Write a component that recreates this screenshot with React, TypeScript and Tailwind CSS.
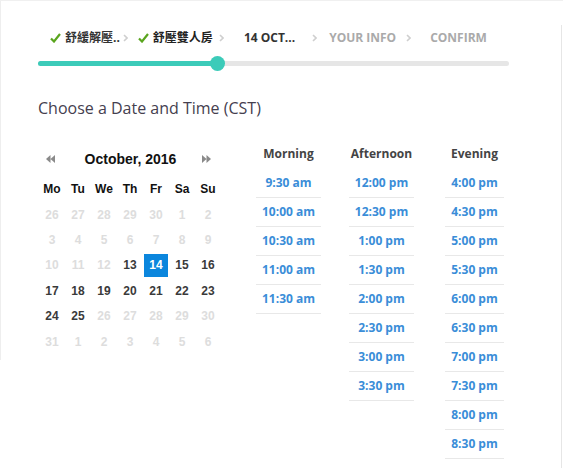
import React from 'react';

const steps = [
  { label: '舒緩解壓..', done: true },
  { label: '舒壓雙人房', done: true },
  { label: '14 OCT...', current: true },
  { label: 'YOUR INFO' },
  { label: 'CONFIRM' },
];

const weeks = [
  [26, 27, 28, 29, 30, 1, 2],
  [3, 4, 5, 6, 7, 8, 9],
  [10, 11, 12, 13, 14, 15, 16],
  [17, 18, 19, 20, 21, 22, 23],
  [24, 25, 26, 27, 28, 29, 30],
  [31, 1, 2, 3, 4, 5, 6],
];

const slots = {
  Morning: ['9:30 am', '10:00 am', '10:30 am', '11:00 am', '11:30 am'],
  Afternoon: ['12:00 pm', '12:30 pm', '1:00 pm', '1:30 pm', '2:00 pm', '2:30 pm', '3:00 pm', '3:30 pm'],
  Evening: ['4:00 pm', '4:30 pm', '5:00 pm', '5:30 pm', '6:00 pm', '6:30 pm', '7:00 pm', '7:30 pm', '8:00 pm', '8:30 pm'],
};

function Check() {
  return (
    <svg width="11" height="10" viewBox="0 0 11 10" className="shrink-0">
      <path d="M1 5.5 L4 8.5 L10 1" fill="none" stroke="#5aa51e" strokeWidth="2.2" />
    </svg>
  );
}

function Chevron() {
  return (
    <svg width="5" height="8" viewBox="0 0 5 8" className="shrink-0">
      <path d="M1 1 L4 4 L1 7" fill="none" stroke="#cfcfcf" strokeWidth="1.6" />
    </svg>
  );
}

function DoubleArrow({ dir }: { dir: 'left' | 'right' }) {
  return (
    <svg width="11" height="10" viewBox="0 0 11 10" className={dir === 'left' ? '' : 'rotate-180'}>
      <path d="M5.5 1 L1 5 L5.5 9 Z M10 1 L5.5 5 L10 9 Z" fill="#8a8a8a" />
    </svg>
  );
}

// active dates in October after today
const isActive = (w: number, d: number) => {
  if (w === 2) return d >= 13 && d <= 16;
  if (w === 3) return true;
  if (w === 4) return d === 24 || d === 25;
  return false;
};

export default function App() {
  return (
    <div className="w-[563px] h-[468px] bg-white border-t border-[#f0f0f0] flex overflow-hidden" style={{ fontFamily: '"Open Sans", "Noto Sans CJK TC", sans-serif' }}>
      {/* left edge */}
      <div className="w-px h-[359px] bg-[#eeeeee] shrink-0" />

      <div className="flex-1 pl-[37px]">
        {/* steps */}
        <div className="mt-[27px] h-[20px] flex items-center ml-[12px] text-[12px] font-bold leading-none">
          <Check />
          <span className="ml-[4px] text-[#333]">{steps[0].label}</span>
          <span className="ml-[3px]"><Chevron /></span>
          <span className="ml-[10px]"><Check /></span>
          <span className="ml-[4px] text-[#222]">{steps[1].label}</span>
          <span className="ml-[6px]"><Chevron /></span>
          <span className="ml-[20px] text-[#333]">{steps[2].label}</span>
          <span className="ml-[17px]"><Chevron /></span>
          <span className="ml-[12px] text-[#aaaaaa]">{steps[3].label}</span>
          <span className="ml-[10px]"><Chevron /></span>
          <span className="ml-[19px] text-[#aaaaaa]">{steps[4].label}</span>
        </div>

        {/* progress */}
        <div className="mt-[13px] w-[471px] h-[5px] bg-[#e6e6e6] rounded-full flex">
          <div className="relative w-[180px] h-[5px] bg-[#3ccbb9] rounded-full">
            <div className="absolute right-[-7px] top-[-5px] w-[15px] h-[15px] rounded-full bg-[#3ccbb9]" />
          </div>
        </div>

        {/* heading */}
        <h2 className="mt-[31px] text-[16px] leading-[22px] text-[#45404f]">Choose a Date and Time (CST)</h2>

        <div className="mt-[25px] flex">
          {/* calendar */}
          <div className="w-[182px] ml-[1px]" style={{ fontFamily: '"Liberation Sans", Arial, sans-serif' }}>
            <div className="h-[30px] flex items-center justify-between px-[6px]">
              <DoubleArrow dir="left" />
              <span className="text-[14px] font-bold text-[#111] ml-[4px]">October, 2016</span>
              <span className="mr-[3px]"><DoubleArrow dir="right" /></span>
            </div>
            <div className="mt-[2px] grid grid-cols-7 h-[26px] items-center text-center text-[12px] font-bold text-[#111]">
              {['Mo', 'Tu', 'We', 'Th', 'Fr', 'Sa', 'Su'].map((d) => (
                <span key={d}>{d}</span>
              ))}
            </div>
            {weeks.map((week, wi) => (
              <div key={wi} className="grid grid-cols-7 h-[25.4px] text-center text-[12px] font-bold">
                {week.map((d, di) => {
                  const selected = wi === 2 && d === 14;
                  if (selected) {
                    return (
                      <div key={di} className="flex items-center justify-center">
                        <span className="w-[24px] h-[23px] bg-[#0b86dd] text-white flex items-center justify-center">{d}</span>
                      </div>
                    );
                  }
                  return (
                    <div key={di} className={`flex items-center justify-center ${isActive(wi, d) ? 'text-[#3a3a3a]' : 'text-[#dddddd]'}`}>
                      {d}
                    </div>
                  );
                })}
              </div>
            ))}
          </div>

          {/* time slots */}
          <div className="ml-[21px] flex">
            {Object.entries(slots).map(([name, times]) => (
              <div key={name} className="w-[93px] flex flex-col items-center">
                <div className="h-[20px] leading-[20px] text-[12px] font-bold text-[#444]">{name}</div>
                <div className="mt-[5px] flex flex-col items-stretch">
                  {times.map((t) => (
                    <div key={t} className="h-[29px] px-[6px] border-b border-[#e8e8e8] flex items-center justify-center text-[12px] font-bold text-[#3a8dd8]">
                      {t}
                    </div>
                  ))}
                </div>
              </div>
            ))}
          </div>
        </div>
      </div>

      {/* right edge */}
      <div className="w-px mt-[24px] bg-[#e6e6e6] shrink-0" />
      <div className="w-px shrink-0" />
    </div>
  );
}
